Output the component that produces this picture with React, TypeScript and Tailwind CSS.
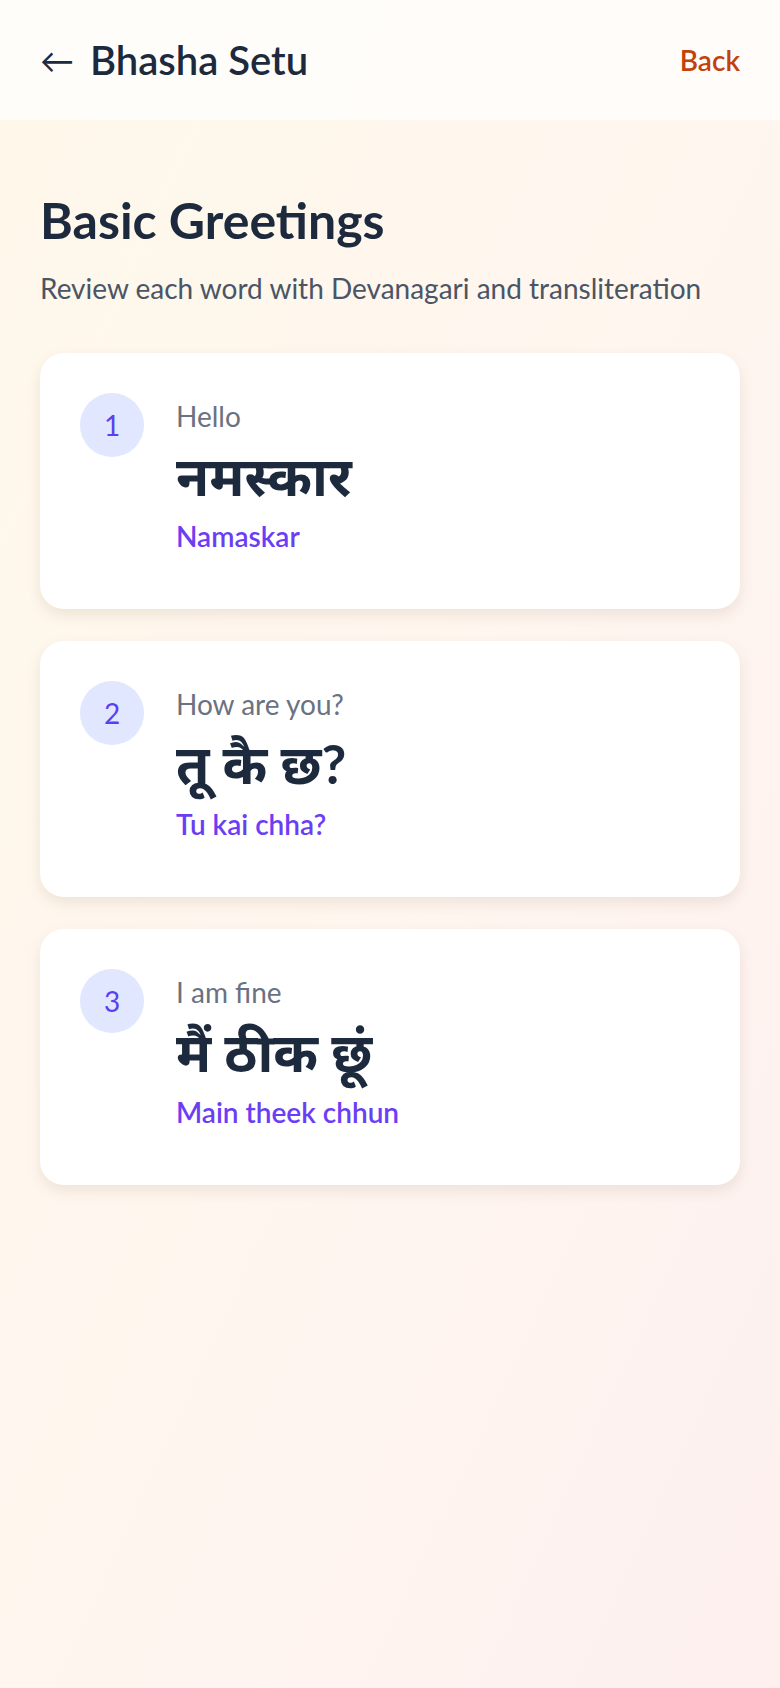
import React from "react";

type Phrase = {
  id: number;
  english: string;
  devanagari: string;
  roman: string;
};

const phrases: Phrase[] = [
  { id: 1, english: "Hello", devanagari: "नमस्कार", roman: "Namaskar" },
  { id: 2, english: "How are you?", devanagari: "तू कै छ?", roman: "Tu kai chha?" },
  { id: 3, english: "I am fine", devanagari: "मैं ठीक छूं", roman: "Main theek chhun" },
];

const sans = "font-['Segoe_UI','Lato','Noto_Sans_Devanagari',sans-serif]";

export default function App() {
  return (
    <div className={`min-h-screen bg-gradient-to-br from-[#fef8ea] via-[#fff6ef] to-[#fdf0ef] ${sans}`}>
      <header className="flex h-[120px] items-center justify-between bg-white/70 px-10">
        <div className="flex items-center gap-4 text-slate-800">
          <span className="text-[34px] leading-none">←</span>
          <h1 className="text-[40px] font-semibold leading-none">Bhasha Setu</h1>
        </div>
        <button className="text-[28px] font-semibold text-[#c2410c]">Back</button>
      </header>

      <main className="px-10 pt-[68px]">
        <h2 className="text-[50px] font-bold leading-[64px] text-slate-800">Basic Greetings</h2>
        <p className="mt-4 text-[28px] leading-10 text-gray-600">
          Review each word with Devanagari and transliteration
        </p>

        <div className="mt-[45px] flex flex-col gap-8">
          {phrases.map(p => (
            <div
              key={p.id}
              className="flex items-start gap-8 rounded-3xl bg-white p-10 pb-[53px] shadow-[0_6px_14px_rgba(120,90,60,0.12)]"
            >
              <div className="flex h-16 w-16 shrink-0 items-center justify-center rounded-full bg-indigo-100 text-[28px] text-[#5b3ff0]">
                {p.id}
              </div>
              <div className="flex flex-col pt-[3px]">
                <span className="text-[28px] leading-10 text-gray-500">{p.english}</span>
                <span className="text-[54px] font-bold leading-[80px] text-slate-800">{p.devanagari}</span>
                <span className="text-[28px] font-semibold leading-10 text-[#6b3ef5]">{p.roman}</span>
              </div>
            </div>
          ))}
        </div>
      </main>
    </div>
  );
}
